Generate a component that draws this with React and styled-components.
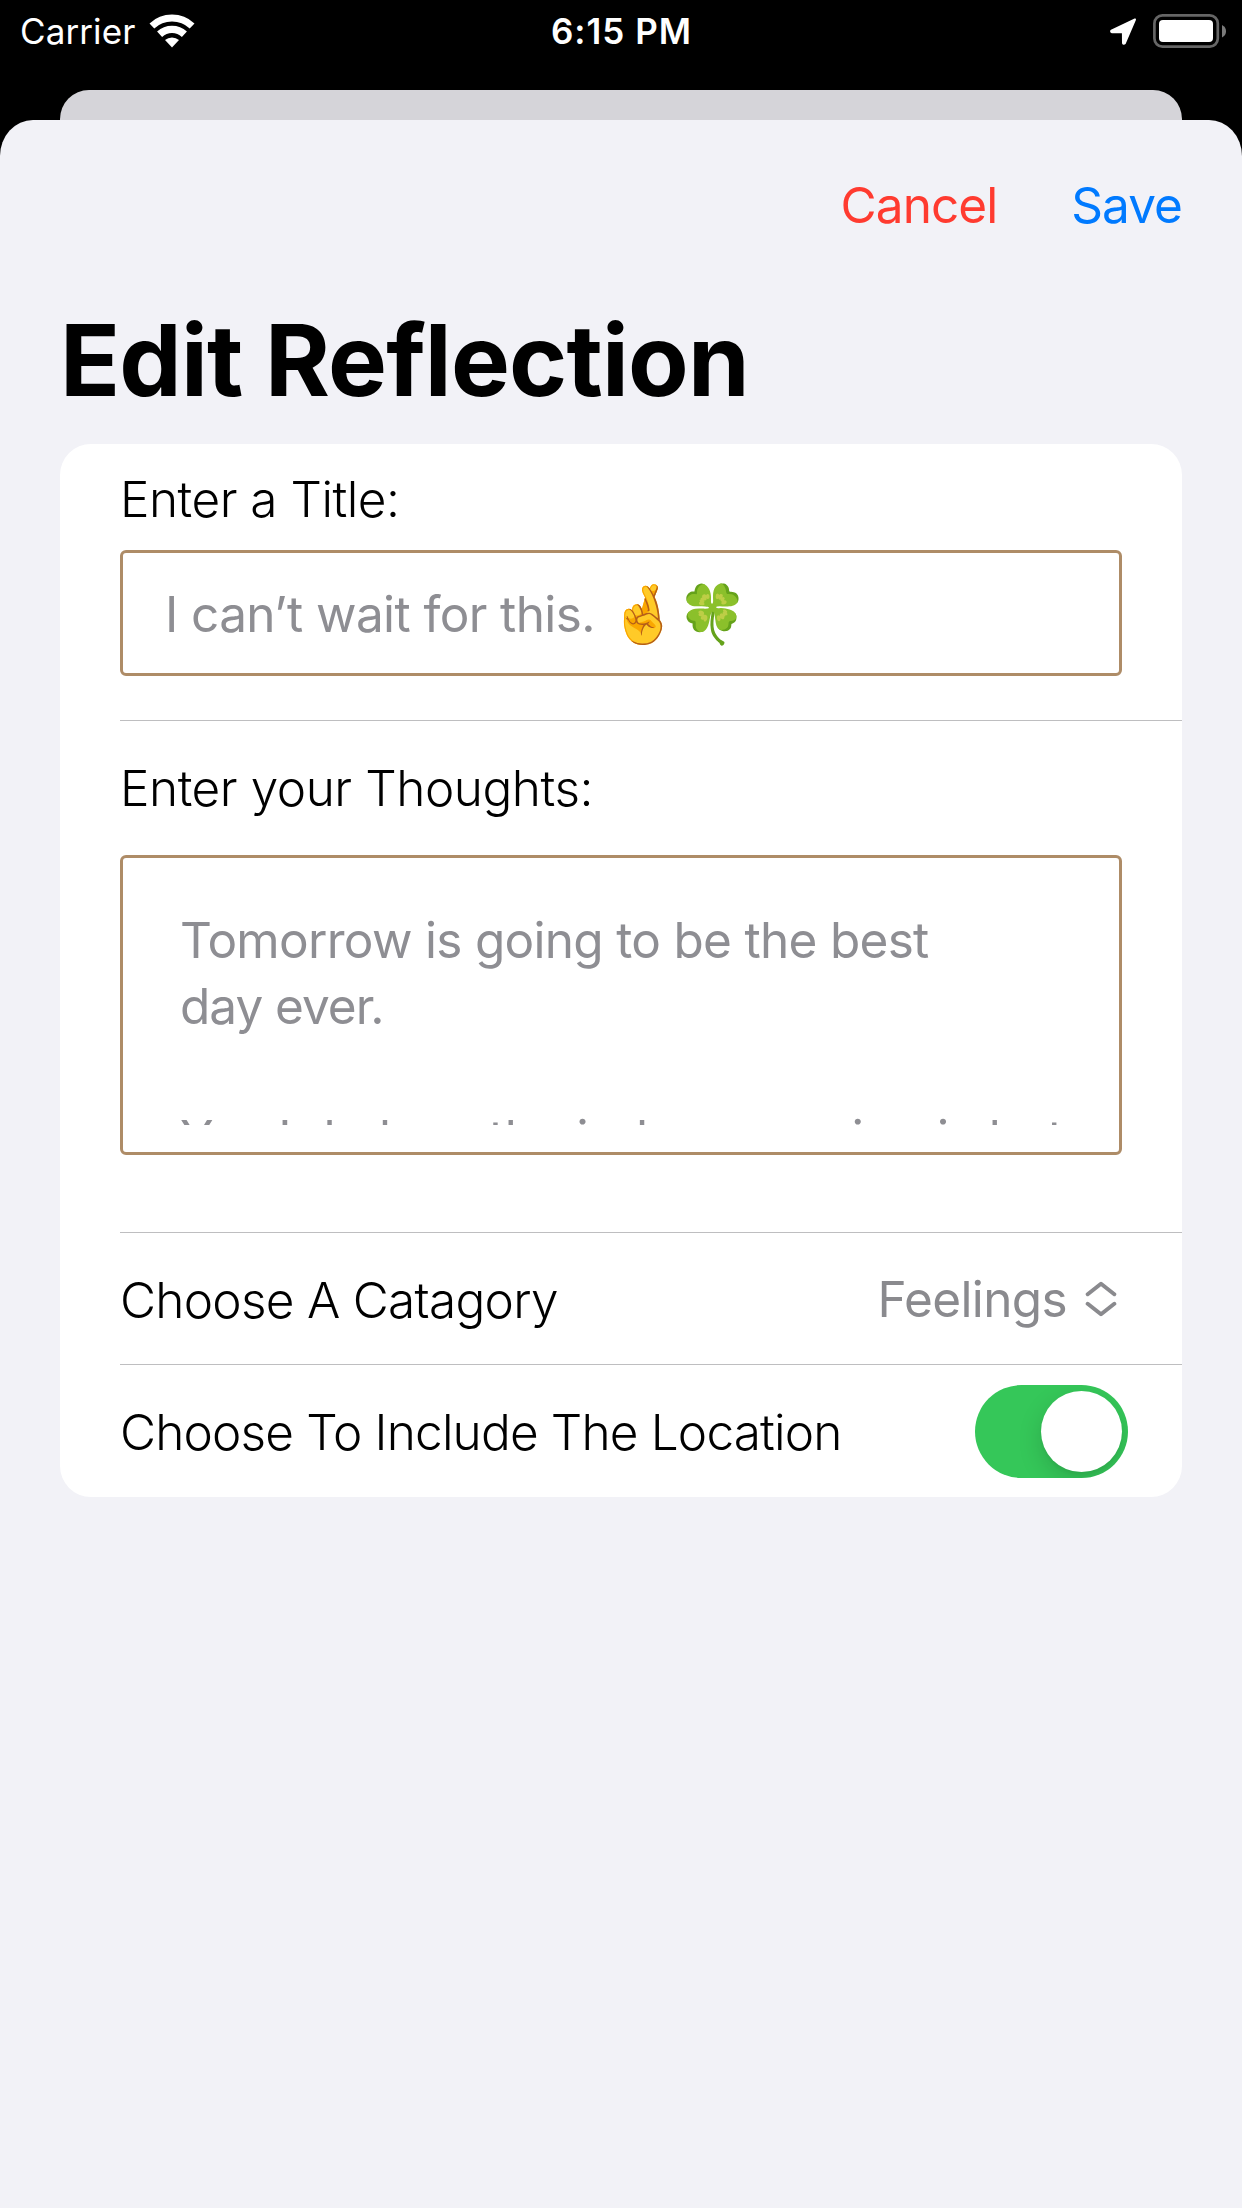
import React from "react";
import styled, { createGlobalStyle } from "styled-components";

const Global = createGlobalStyle`
  * { box-sizing: border-box; }
  body {
    margin: 0;
    background: #000;
    font-family: Inter, "Liberation Sans", sans-serif;
    -webkit-font-smoothing: antialiased;
  }
`;

const Screen = styled.div`
  width: 1242px;
  height: 2208px;
  display: flex;
  flex-direction: column;
  background: #000;
  overflow: hidden;
`;

const StatusBar = styled.header`
  height: 90px;
  padding: 0 15px 28px 20px;
  display: grid;
  grid-template-columns: 1fr auto 1fr;
  align-items: center;
  color: #fff;
  font-size: 35px;
  line-height: 62px;
`;

const CarrierGroup = styled.div`
  display: flex;
  align-items: center;
  gap: 14px;
  letter-spacing: 0.1px;
`;

const Clock = styled.div`
  margin-right: 4px;
  font-weight: 600;
  letter-spacing: 1px;
`;

const Indicators = styled.div`
  display: flex;
  justify-content: flex-end;
  align-items: center;
  gap: 16px;
`;

const Icon = styled.svg`
  display: block;
  flex: none;
`;

const BackSheet = styled.div`
  height: 30px;
  margin: 0 60px;
  background: #d5d4d9;
  border-radius: 29px 29px 0 0;
`;

const Sheet = styled.main`
  flex: 1;
  background: #f2f2f7;
  border-radius: 33px 33px 0 0 / 36px 36px 0 0;
`;

const NavBar = styled.nav`
  height: 170px;
  padding-right: 60px;
  display: flex;
  justify-content: flex-end;
  align-items: center;
  gap: 74px;
`;

const NavButton = styled.button`
  border: 0;
  padding: 0;
  background: none;
  font: 400 49.5px/66px Inter, "Liberation Sans", sans-serif;
  letter-spacing: -0.95px;
  color: ${(p) => p.$color};
`;

const Heading = styled.h1`
  margin: 0;
  height: 154px;
  padding-left: 60px;
  font-size: 99px;
  font-weight: 700;
  line-height: 140px;
  letter-spacing: -0.8px;
  color: #000;
`;

const Card = styled.section`
  margin: 0 60px;
  background: #fff;
  border-radius: 31px;
`;

const Field = styled.div`
  padding: 0 60px ${(p) => p.$bottom}px;
`;

const Row = styled.div`
  height: ${(p) => p.$height}px;
  padding: 0 60px;
  display: flex;
  justify-content: space-between;
  align-items: center;
`;

const Label = styled.label`
  display: block;
  font-size: 49.5px;
  font-weight: 300;
  color: #000;
  white-space: nowrap;
  letter-spacing: ${(p) => p.$tracking}px;
  line-height: ${(p) => p.$line || 66}px;
  padding-top: ${(p) => p.$top || 0}px;
`;

const Divider = styled.hr`
  height: 1px;
  margin: 0 0 0 60px;
  border: 0;
  background: #bebec0;
`;

const Box = styled.div`
  border: 3px solid #ae8c67;
  border-radius: 6px;
  color: #8e8e93;
  font-size: 49.5px;
  line-height: 66px;
  white-space: nowrap;
`;

const TitleInput = styled(Box)`
  height: 126px;
  padding: 2px 42px 0;
  display: flex;
  align-items: center;
  letter-spacing: -0.6px;
`;

const Emoji = styled.span`
  margin: -1px 0 0 13px;
  font-size: 57px;
  letter-spacing: -2px;
`;

const ThoughtsInput = styled(Box)`
  height: 300px;
  padding: 49px 40px 27px 57px;
`;

const ThoughtsText = styled.div`
  height: 218px;
  overflow: hidden;
`;

const Line = styled.div`
  height: 66px;
  letter-spacing: ${(p) => p.$tracking}px;
`;

const Picker = styled.div`
  display: flex;
  align-items: center;
  gap: 18px;
  padding-right: 5px;
  color: #8a8a8e;
  font-size: 49.5px;
  line-height: 66px;
  letter-spacing: -0.65px;
`;

const Switch = styled.div`
  width: 153px;
  height: 93px;
  margin-right: -6px;
  padding: 6px;
  display: flex;
  justify-content: flex-end;
  border-radius: 47px;
  background: #35c759;
  overflow: hidden;
`;

const Knob = styled.div`
  width: 81px;
  height: 81px;
  border-radius: 50%;
  background: #fff;
  box-shadow: 0 9px 24px rgba(0, 0, 0, 0.15), 0 3px 3px rgba(0, 0, 0, 0.04);
`;

const WifiIcon = () => (
  <Icon width="46" height="34" viewBox="0 0 46 34">
    <g fill="none" stroke="#fff">
      <path d="M2.9 12a29.5 29.5 0 0 1 40.2 0" strokeWidth="7" />
      <path d="M10.6 20.3a18.2 18.2 0 0 1 24.8 0" strokeWidth="7.4" />
    </g>
    <path d="M16 26.1a10.4 10.4 0 0 1 14 0L23 33.4z" fill="#fff" />
  </Icon>
);

const LocationIcon = () => (
  <Icon width="28" height="28" viewBox="0 0 28 28">
    <path
      d="M26 2.5 2.4 13.6Q1.6 15 3 15.2L13.9 15.3 14 26Q14.6 27.4 15.9 26.2z"
      fill="#fff"
      stroke="#fff"
      strokeWidth="2"
      strokeLinejoin="round"
    />
  </Icon>
);

const BatteryIcon = () => (
  <Icon width="74" height="34" viewBox="0 0 74 34">
    <rect x="1.4" y="1.4" width="63.4" height="31.2" rx="8" fill="none" stroke="#666" strokeWidth="2.7" />
    <rect x="6" y="6" width="54" height="22" rx="4" fill="#fff" />
    <path d="M69 11q4 2 4 6.200t-4 6.200z" fill="#7a7a7a" />
  </Icon>
);

const UpDownIcon = () => (
  <Icon width="32" height="37" viewBox="0 0 32 37">
    <path
      d="M2.700 14.200 16 3.700 29.300 14.200M2.700 23.800 16 34.300 29.300 23.800"
      fill="none"
      stroke="#8a8a8e"
      strokeWidth="4"
      strokeLinecap="round"
      strokeLinejoin="round"
    />
  </Icon>
);

export default function App() {
  return (
    <>
      <Global />
      <Screen>
        <StatusBar>
          <CarrierGroup>
            Carrier
            <WifiIcon />
          </CarrierGroup>
          <Clock>6:15 PM</Clock>
          <Indicators>
            <LocationIcon />
            <BatteryIcon />
          </Indicators>
        </StatusBar>
        <BackSheet />
        <Sheet>
          <NavBar>
            <NavButton $color="#ff3b30">Cancel</NavButton>
            <NavButton $color="#007aff">Save</NavButton>
          </NavBar>
          <Heading>Edit Reflection</Heading>
          <Card>
            <Field $bottom={44}>
              <Label $tracking={-0.5} $line={102} $top={4}>Enter a Title:</Label>
              <TitleInput>
                I can’t wait for this.
                <Emoji>🤞🍀</Emoji>
              </TitleInput>
            </Field>
            <Divider />
            <Field $bottom={77}>
              <Label $tracking={-0.45} $line={134}>Enter your Thoughts:</Label>
              <ThoughtsInput>
                <ThoughtsText>
                  <Line $tracking={-0.7}>Tomorrow is going to be the best</Line>
                  <Line $tracking={-1}>day ever.</Line>
                  <Line />
                  <Line $tracking={-0.1}>Yes I do love the indoor evening is hot</Line>
                </ThoughtsText>
              </ThoughtsInput>
            </Field>
            <Divider />
            <Row $height={131}>
              <Label $tracking={-0.72} $top={2}>Choose A Catagory</Label>
              <Picker>
                Feelings
                <UpDownIcon />
              </Picker>
            </Row>
            <Divider />
            <Row $height={132}>
              <Label $tracking={-0.83} $top={1}>Choose To Include The Location</Label>
              <Switch>
                <Knob />
              </Switch>
            </Row>
          </Card>
        </Sheet>
      </Screen>
    </>
  );
}
